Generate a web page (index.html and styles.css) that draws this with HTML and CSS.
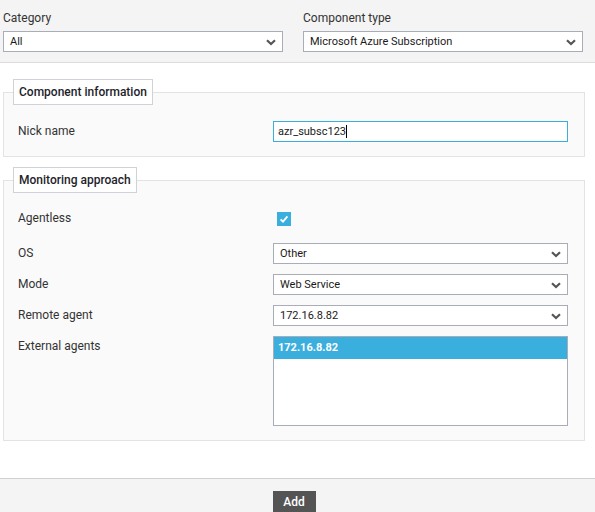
FILE: index.html
```html
<!DOCTYPE html>
<html>
<head>
<meta charset="utf-8">
<link rel="stylesheet" href="styles.css">
</head>
<body>
<div class="topbar">
  <div class="topfield">
    <div class="toplabel">Category</div>
    <div class="select"><span>All</span><svg class="chev" width="10" height="7" viewBox="0 0 10 7"><path d="M1 1.2 L5 5 L9 1.2" fill="none" stroke="#555" stroke-width="2.2"/></svg></div>
  </div>
  <div class="topfield">
    <div class="toplabel">Component type</div>
    <div class="select"><span>Microsoft Azure Subscription</span><svg class="chev" width="10" height="7" viewBox="0 0 10 7"><path d="M1 1.2 L5 5 L9 1.2" fill="none" stroke="#555" stroke-width="2.2"/></svg></div>
  </div>
</div>

<div class="panel panel-info">
  <div class="legend">Component information</div>
  <div class="row row-nick">
    <div class="label">Nick name</div>
    <div class="input"><span class="caret">azr_subsc123</span></div>
  </div>
</div>

<div class="panel panel-mon">
  <div class="legend">Monitoring approach</div>
  <div class="row row-agentless">
    <div class="label">Agentless</div>
    <div class="ctrl"><span class="checkbox"><svg width="14" height="14" viewBox="0 0 14 14"><path d="M3.6 7.3 L6 9.6 L10.4 4.4" fill="none" stroke="#fff" stroke-width="1.8"/></svg></span></div>
  </div>
  <div class="row row-os">
    <div class="label">OS</div>
    <div class="select"><span>Other</span><svg class="chev" width="10" height="7" viewBox="0 0 10 7"><path d="M1 1.2 L5 5 L9 1.2" fill="none" stroke="#555" stroke-width="2.2"/></svg></div>
  </div>
  <div class="row">
    <div class="label">Mode</div>
    <div class="select"><span>Web Service</span><svg class="chev" width="10" height="7" viewBox="0 0 10 7"><path d="M1 1.2 L5 5 L9 1.2" fill="none" stroke="#555" stroke-width="2.2"/></svg></div>
  </div>
  <div class="row">
    <div class="label">Remote agent</div>
    <div class="select"><span>172.16.8.82</span><svg class="chev" width="10" height="7" viewBox="0 0 10 7"><path d="M1 1.2 L5 5 L9 1.2" fill="none" stroke="#555" stroke-width="2.2"/></svg></div>
  </div>
  <div class="row row-list">
    <div class="label">External agents</div>
    <div class="listbox">
      <div class="option selected">172.16.8.82</div>
    </div>
  </div>
</div>

<div class="footer">
  <button class="btn">Add</button>
</div>
</body>
</html>
```
FILE: styles.css
```css
* { box-sizing: border-box; }
html, body { margin: 0; padding: 0; background: #fff; }
body {
  width: 595px;
  height: 512px;
  overflow: hidden;
  font-family: Roboto, "Liberation Sans", sans-serif;
  font-size: 12px;
  color: #333;
}
.topbar {
  background: #f4f4f4;
  border-bottom: 1px solid #dcdcdc;
  height: 63px;
  padding: 10px 0 0 3px;
  display: flex;
  gap: 20px;
}
.topfield { width: 280px; }
.toplabel {
  height: 16px;
  line-height: 16px;
  margin-bottom: 5px;
  color: #333;
}
.select {
  height: 21px;
  border: 1px solid #a9adb8;
  background: #fff;
  display: flex;
  align-items: center;
  justify-content: space-between;
  padding: 0 6px 0 6px;
  font-size: 11px;
  color: #1a1a1a;
}
.chev { display: block; margin-top: 1px; }
.panel {
  margin: 0 10px 0 3px;
  border: 1px solid #e3e3e3;
  background: #fafafa;
  padding: 0 16px 0 14px;
}
.panel-info { margin-top: 29px; padding-bottom: 14px; }
.panel-mon { margin-top: 23px; padding-bottom: 14px; }
.legend {
  width: fit-content;
  margin: -14px 0 0 -5px;
  height: 26px;
  line-height: 24px;
  padding: 0 5px 0 5px;
  border: 1px solid #cfd2d6;
  background: #fff;
  font-weight: 500;
  color: #1e1e2a;
}
.panel-info .legend { width: 140px; }
.panel-mon .legend { width: 124px; }
.row {
  display: grid;
  grid-template-columns: 255px 295px;
  align-items: center;
  min-height: 21px;
  margin-top: 10px;
}
.row-nick { margin-top: 16px; }
.row-agentless { margin-top: 15px; }
.row-os { margin-top: 14px; }
.row-list { align-items: start; }
.label { color: #333; line-height: 21px; }
.row-list .label { line-height: 20px; }
.input {
  height: 21px;
  border: 1px solid #3aaedc;
  background: #fff;
  padding: 0 4px;
  line-height: 19px;
  font-size: 11px;
  color: #1a1a1a;
}
.caret { border-right: 1px solid #000; }
.ctrl { display: flex; align-items: center; padding-left: 4px; }
.checkbox {
  width: 14px;
  height: 14px;
  background: #3aaedc;
  display: block;
}
.checkbox svg { display: block; }
.listbox {
  height: 90px;
  border: 1px solid #a9adb8;
  background: #fff;
}
.option {
  height: 22px;
  line-height: 22px;
  padding: 0 4px;
  font-size: 11px;
}
.option.selected {
  background: #3aaedc;
  color: #fff;
  font-weight: 700;
}
.footer {
  position: absolute;
  left: 0;
  top: 478px;
  width: 595px;
  height: 34px;
  border-top: 1px solid #d0d0d0;
  background: #f4f4f4;
  display: flex;
  justify-content: center;
  padding: 12px 7px 0 0;
}
.btn {
  width: 43px;
  height: 21px;
  background: #545454;
  color: #fff;
  border: none;
  font-family: Roboto, "Liberation Sans", sans-serif;
  font-size: 12px;
  font-weight: 500;
  padding: 0;
  margin: 0;
}
```
